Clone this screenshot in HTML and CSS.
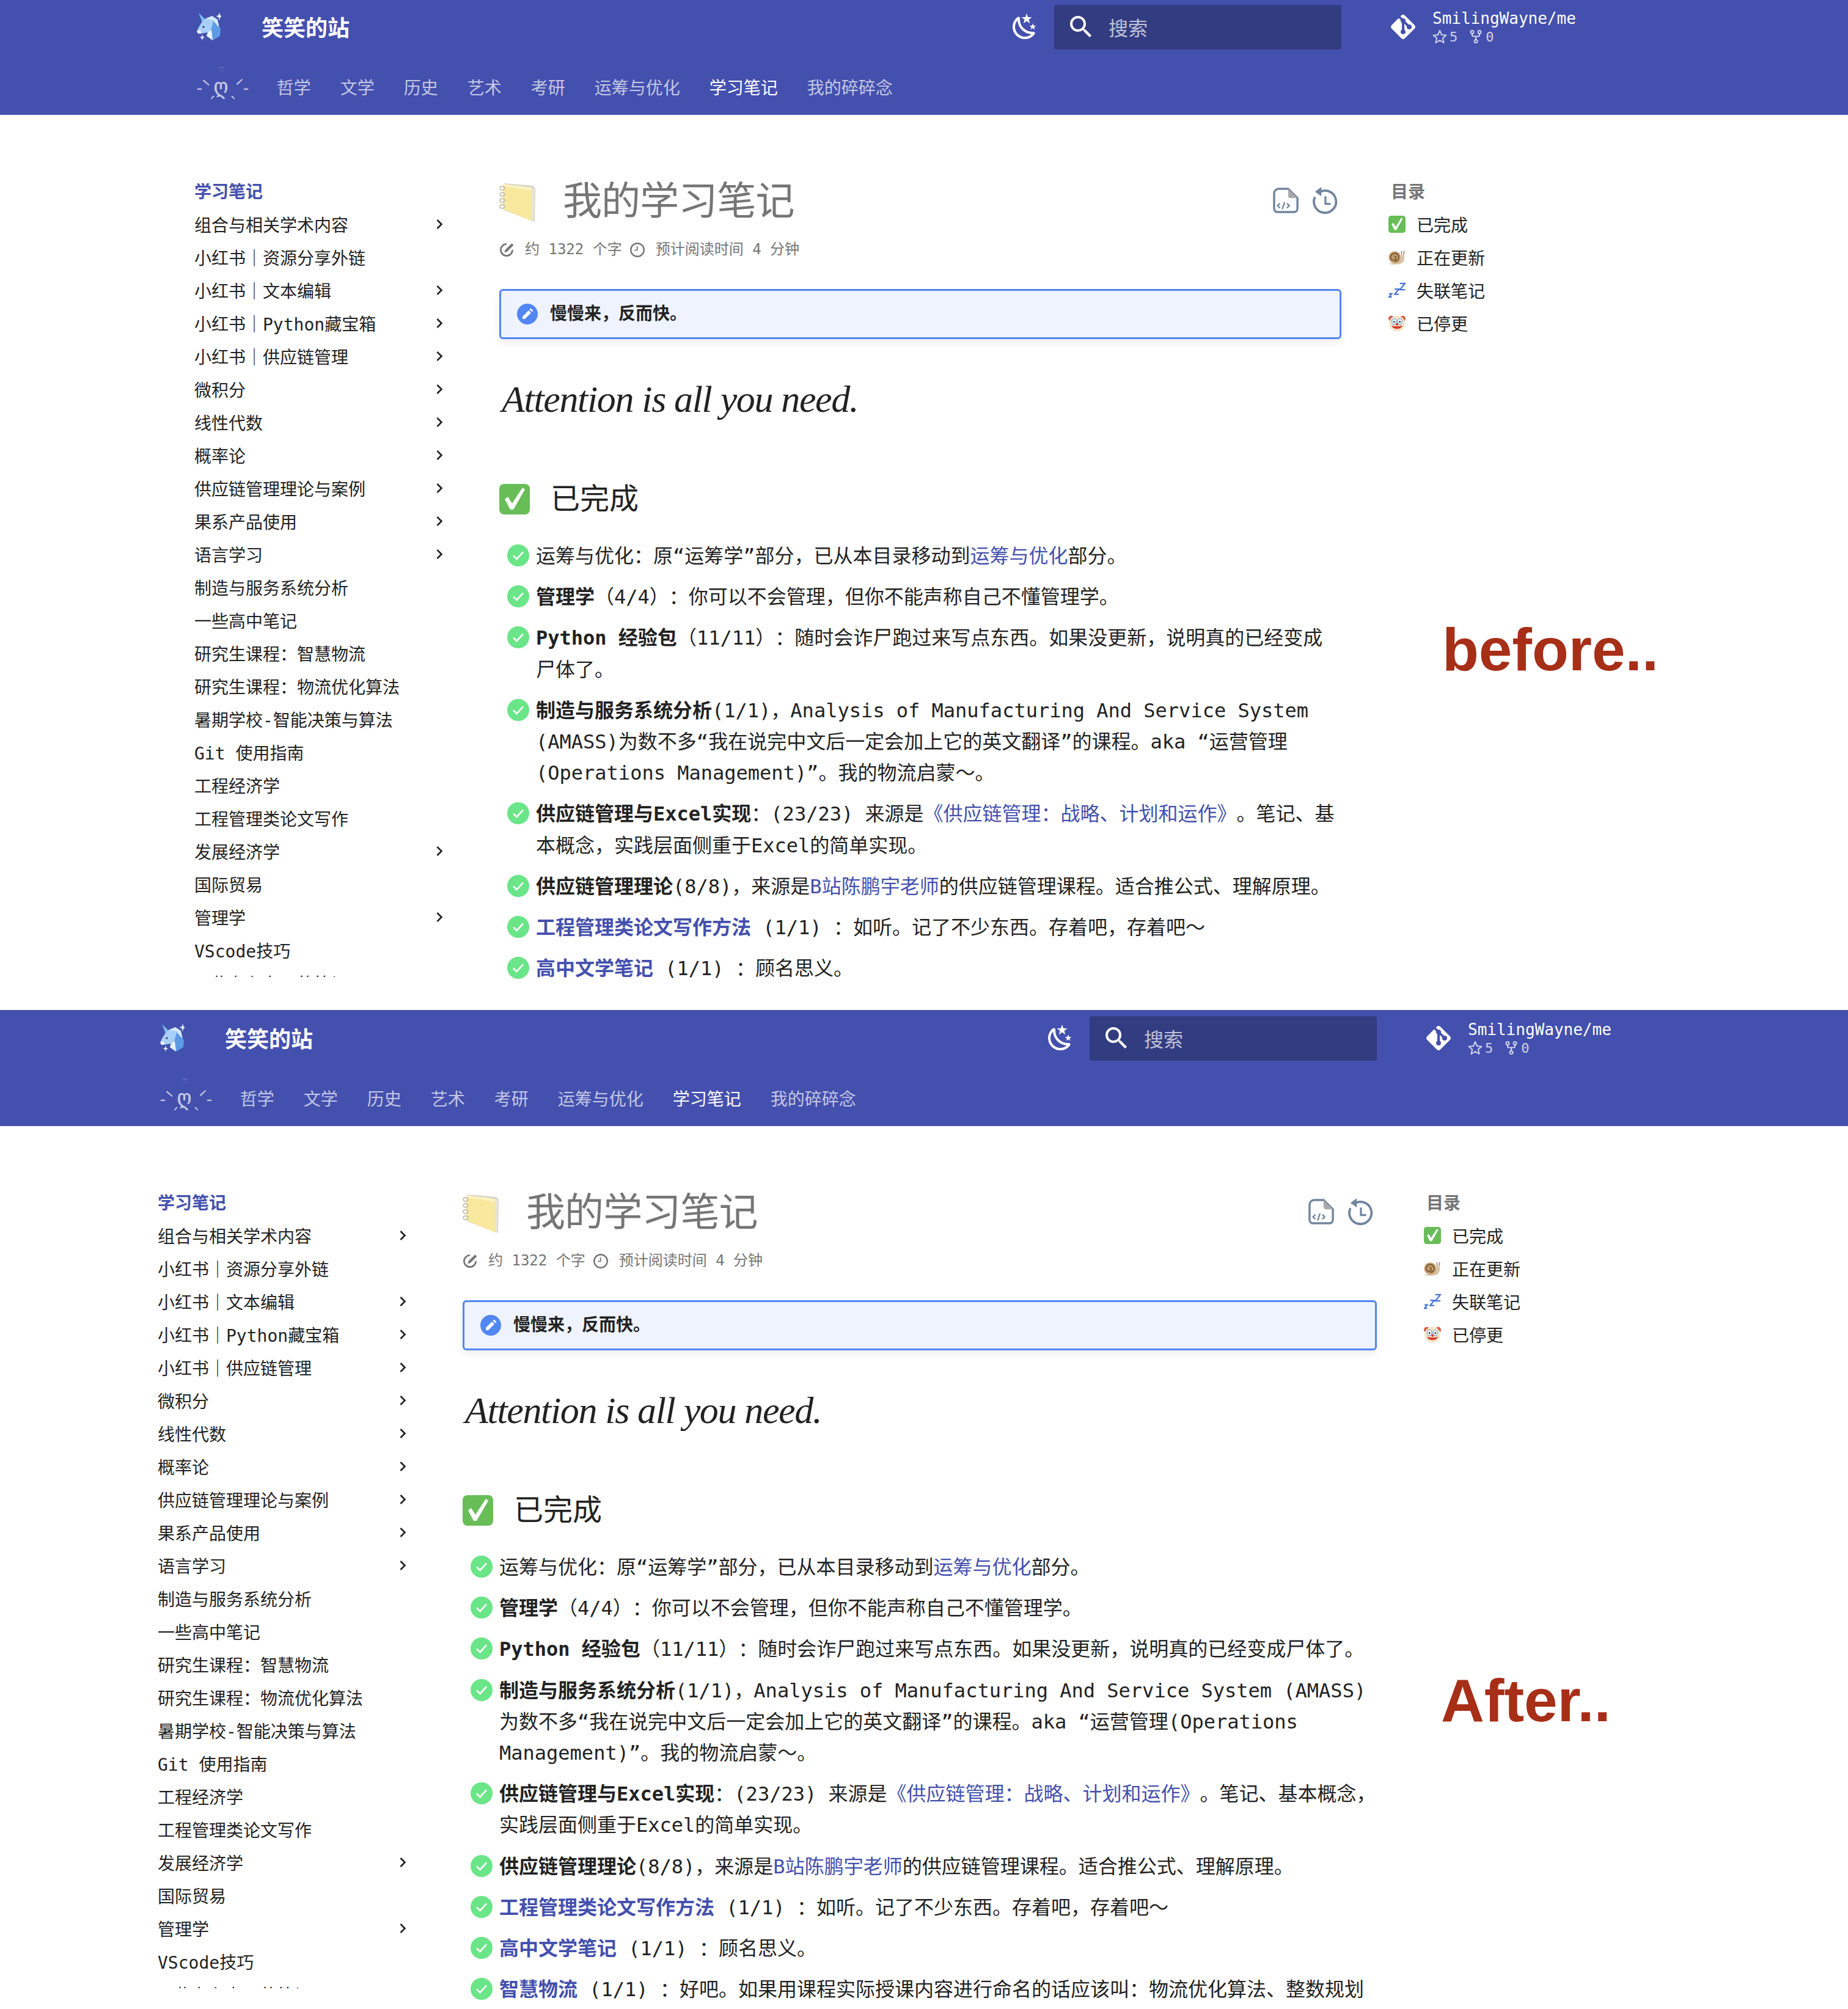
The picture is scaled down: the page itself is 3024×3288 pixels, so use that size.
FILE: index.html
```html
<!DOCTYPE html>
<html>
<head>
    <title>我的学习笔记</title>
    <meta charset="utf-8">
    <link rel="stylesheet" href="styles.css">
</head>

<body>
<svg class="sprite" xmlns="http://www.w3.org/2000/svg">
    <symbol id="i-unicorn" viewBox="16 12 44 46">
        <polygon points="23,12 34,23 29,27" fill="#7cc0ef"/>
        <polygon points="29,26 35,21 45,19 50,30 46,45 36,50 38,44 26,46 20,42 23,36" fill="#a8cff7"/>
        <polygon points="35,21 45,17 54,23 57,36 52,32 47,24" fill="#d3e7fb"/>
        <polygon points="47,26 59,38 58,50 46,57 41,48" fill="#5e9be6"/>
        <polygon points="38,44 44,40 46,57 36,50" fill="#e7f3fe"/>
        <polygon points="20,42 26,40 27,46 22,46" fill="#eef3f8"/>
        <circle cx="31" cy="35" r="1.5" fill="#1f2a4a"/>
        <path d="M57 11l1.3 5 4.2 1.6-4.2 1.6-1.3 5-1.3-5-4.2-1.6 4.2-1.6zM29 47l1 4 3.4 1.2-3.4 1.2-1 4-1-4-3.4-1.2 3.4-1.2z" fill="#e9f2ff"/>
    </symbol>
    <symbol id="i-moon" viewBox="0 0 24 24">
        <path d="M17.75,4.09L15.22,6.03L16.13,9.09L13.5,7.28L10.87,9.09L11.78,6.03L9.25,4.09L12.44,4L13.5,1L14.56,4L17.75,4.09M21.25,11L19.61,12.25L20.2,14.23L18.5,13.06L16.8,14.23L17.39,12.25L15.75,11L17.81,10.95L18.5,9L19.19,10.95L21.25,11M18.97,15.95C19.8,15.87 20.69,17.05 20.16,17.8C19.84,18.25 19.5,18.67 19.08,19.07C15.17,23 8.84,23 4.94,19.07C1.03,15.17 1.03,8.83 4.94,4.93C5.34,4.53 5.76,4.17 6.21,3.85C6.96,3.32 8.14,4.21 8.06,5.04C7.79,7.9 8.75,10.87 10.95,13.06C13.14,15.26 16.1,16.22 18.97,15.95M17.33,17.97C14.5,17.81 11.7,16.64 9.53,14.5C7.36,12.31 6.2,9.5 6.04,6.68C3.23,9.82 3.34,14.64 6.35,17.66C9.37,20.67 14.19,20.78 17.33,17.97Z" fill="currentColor"/>
    </symbol>
    <symbol id="i-search" viewBox="0 0 24 24">
        <path d="M9.5 3A6.5 6.5 0 0 1 16 9.5c0 1.61-.59 3.09-1.56 4.23l.27.27h.79l5 5-1.5 1.5-5-5v-.79l-.27-.27A6.516 6.516 0 0 1 9.5 16 6.5 6.5 0 0 1 3 9.5 6.5 6.5 0 0 1 9.5 3m0 2C7 5 5 7 5 9.5S7 14 9.5 14 14 12 14 9.5 12 5 9.5 5z" fill="currentColor"/>
    </symbol>
    <symbol id="i-git" viewBox="0 0 24 24">
        <path d="M2.6 10.59 8.38 4.8l1.69 1.7c-.24.85.15 1.78.93 2.23v5.54c-.6.34-1 .99-1 1.73a2 2 0 0 0 2 2 2 2 0 0 0 2-2c0-.74-.4-1.39-1-1.73V9.41l2.07 2.09c-.07.15-.07.32-.07.5a2 2 0 0 0 2 2 2 2 0 0 0 2-2 2 2 0 0 0-2-2c-.18 0-.35 0-.5.07L13.93 7.5a1.98 1.98 0 0 0-1.15-2.34c-.43-.16-.88-.2-1.28-.09L9.8 3.38l.79-.78c.78-.79 2.04-.79 2.82 0l7.99 7.99c.79.78.79 2.04 0 2.82l-7.99 7.99c-.78.79-2.04.79-2.82 0L2.6 13.41c-.79-.78-.79-2.04 0-2.82z" fill="currentColor"/>
    </symbol>
    <symbol id="i-star" viewBox="0 0 24 24">
        <polygon points="12,2 15,9 22.5,9.7 16.8,14.6 18.6,22 12,18 5.4,22 7.2,14.6 1.5,9.7 9,9" fill="none" stroke="currentColor" stroke-width="2" stroke-linejoin="round"/>
    </symbol>
    <symbol id="i-fork" viewBox="0 0 24 24">
        <g fill="none" stroke="currentColor" stroke-width="2">
            <circle cx="6" cy="4.5" r="2.5"/><circle cx="18" cy="4.5" r="2.5"/><circle cx="12" cy="19.5" r="2.5"/>
            <path d="M6 7v2.5a2 2 0 0 0 2 2h8a2 2 0 0 0 2-2V7M12 11.5V17"/>
        </g>
    </symbol>
    <symbol id="i-chevron" viewBox="0 0 24 24">
        <path d="M8.59 16.58 13.17 12 8.59 7.41 10 6l6 6-6 6-1.41-1.42z" fill="currentColor"/>
    </symbol>
    <symbol id="i-notebook" viewBox="0 0 60 64">
        <polygon points="8,2 55,6 59,10 58,64 55,64 8,46" fill="#d4d2c8"/>
        <polygon points="6,3 54,9 53,64 6,44" fill="#f9e99e"/>
        <polygon points="6,3 54,9 53,14 6,7" fill="#fbf2c0"/>
        <polygon points="53,9 58,10 57,62 53,64" fill="#e6e4da"/>
        <g fill="none" stroke="#c8c4b0" stroke-width="2">
            <ellipse cx="5" cy="10" rx="4" ry="3"/><ellipse cx="5" cy="20" rx="4" ry="3"/><ellipse cx="5" cy="30" rx="4" ry="3"/><ellipse cx="5" cy="40" rx="4" ry="3"/>
        </g>
    </symbol>
    <symbol id="i-done" viewBox="0 0 50 50">
        <rect width="50" height="50" rx="8" fill="#68bd57"/>
        <path d="M9 25l5-4 7 11L38 6l4 3-19 33h-5z" fill="#fff"/>
    </symbol>
    <symbol id="i-snail" viewBox="0 0 30 26">
        <path d="M1 24c6-1 13 0 18-5 3-3 3-7 3-11h5c2 5 1 12-3 15-4 3-15 3-22 2z" fill="#d8c3a5"/>
        <circle cx="11" cy="13" r="10.5" fill="#c19a6b"/>
        <path d="M11 20a7 7 0 1 0-7-7c0 3 2 5 5 5s4-2 4-4-1-3-3-3" fill="none" stroke="#6f4d2a" stroke-width="1.6"/>
        <path d="M23 8V2M27 8l.5-6" stroke="#7b6a56" stroke-width="1.4"/>
    </symbol>
    <symbol id="i-zzz" viewBox="0 0 30 30">
        <path d="M1 21h5l-5 6h5M11 13h7l-7 9h7M20 3h9l-9 11h9" fill="none" stroke="#4a76d8" stroke-width="2.4"/>
    </symbol>
    <symbol id="i-clown" viewBox="0 0 30 30">
        <circle cx="5" cy="7" r="5" fill="#e0563f"/><circle cx="25" cy="7" r="5" fill="#e0563f"/>
        <circle cx="15" cy="15.5" r="14" fill="#f5e6c8"/>
        <ellipse cx="10" cy="12" rx="4" ry="5" fill="#fff" stroke="#6fa4d8" stroke-width="1.4"/><ellipse cx="20" cy="12" rx="4" ry="5" fill="#fff" stroke="#6fa4d8" stroke-width="1.4"/>
        <circle cx="10" cy="12.5" r="1.6" fill="#3a3a3a"/><circle cx="20" cy="12.5" r="1.6" fill="#3a3a3a"/>
        <path d="M5 19c4 8 16 8 20 0-5 2-15 2-20 0z" fill="#d8382b"/>
        <circle cx="15" cy="17" r="2.2" fill="#d8382b"/>
    </symbol>
    <symbol id="i-task" viewBox="0 0 36 36">
        <circle cx="18" cy="18" r="18" fill="#6ae587"/>
        <path d="M10 18.5l5.5 5.5L26 12.5" fill="none" stroke="#fff" stroke-width="2.6"/>
    </symbol>
    <symbol id="i-pencil" viewBox="0 0 34 34">
        <circle cx="17" cy="17" r="17" fill="#5286f2"/>
        <path d="M9 25v-4l10-10 4 4-10 10zM20.5 9.5l2-2 4 4-2 2z" fill="#fff"/>
    </symbol>
    <symbol id="i-wrote" viewBox="2 2 20 20">
        <path d="M20 12a8 8 0 1 1-8-8" fill="none" stroke="currentColor" stroke-width="2.2"/>
        <path d="M9 15.5l1-3.5 9-9 2.5 2.5-9 9z" fill="currentColor"/>
    </symbol>
    <symbol id="i-clock" viewBox="2 2 20 20">
        <path d="M12 20a8 8 0 0 0 8-8 8 8 0 0 0-8-8 8 8 0 0 0-8 8 8 8 0 0 0 8 8m0-18a10 10 0 0 1 10 10 10 10 0 0 1-10 10C6.47 22 2 17.5 2 12A10 10 0 0 1 12 2m.5 5v6H8v-1.5h3V7z" fill="currentColor"/>
    </symbol>
    <symbol id="i-source" viewBox="0 0 44 44">
        <path d="M10 2h16l16 16v18a6 6 0 0 1-6 6H8a6 6 0 0 1-6-6V10a8 8 0 0 1 8-8z" fill="none" stroke="currentColor" stroke-width="3.6"/>
        <path d="M26 2l16 16H30a4 4 0 0 1-4-4z" fill="#a9a9ad"/>
        <path d="M12 27l-4 4 4 4M24 27l4 4-4 4M20 25l-4 12" fill="none" stroke="currentColor" stroke-width="2.4"/>
    </symbol>
    <symbol id="i-history" viewBox="0 0 44 48">
        <path d="M14 9a19 19 0 1 1-9 9" fill="none" stroke="currentColor" stroke-width="4"/>
        <path d="M16 1L5 9l11 8z" fill="currentColor"/>
        <path d="M23 17v13h9" fill="none" stroke="currentColor" stroke-width="3.4"/>
    </symbol>
</svg>

<section class="shot before">
    <header class="site-head">
        <div class="head-top">
            <div class="head-main">
                <div class="brand">
                    <svg class="logo"><use href="#i-unicorn"/></svg>
                    <span class="site-name">笑笑的站</span>
                </div>
                <svg class="moon"><use href="#i-moon"/></svg>
                <div class="search">
                    <svg class="search-icon"><use href="#i-search"/></svg>
                    <span>搜索</span>
                </div>
            </div>
            <div class="repo">
                <svg class="repo-icon"><use href="#i-git"/></svg>
                <div>
                    <div class="repo-name">SmilingWayne/me</div>
                    <div class="repo-facts">
                        <svg><use href="#i-star"/></svg><span>5</span>
                        <svg class="fork"><use href="#i-fork"/></svg><span>0</span>
                    </div>
                </div>
            </div>
        </div>
        <nav class="tabs">
            <a class="kaomoji">-ˋˏ<span>ღ<small>♡</small></span>ˎˊ-</a>
            <a>哲学</a><a>文学</a><a>历史</a><a>艺术</a><a>考研</a><a>运筹与优化</a>
            <a class="on">学习笔记</a><a>我的碎碎念</a>
        </nav>
    </header>

    <div class="page">
        <aside class="side">
            <div class="side-title">学习笔记</div>
            <div class="side-item">组合与相关学术内容<svg><use href="#i-chevron"/></svg></div>
            <div class="side-item">小红书｜资源分享外链</div>
            <div class="side-item">小红书｜文本编辑<svg><use href="#i-chevron"/></svg></div>
            <div class="side-item">小红书｜Python藏宝箱<svg><use href="#i-chevron"/></svg></div>
            <div class="side-item">小红书｜供应链管理<svg><use href="#i-chevron"/></svg></div>
            <div class="side-item">微积分<svg><use href="#i-chevron"/></svg></div>
            <div class="side-item">线性代数<svg><use href="#i-chevron"/></svg></div>
            <div class="side-item">概率论<svg><use href="#i-chevron"/></svg></div>
            <div class="side-item">供应链管理理论与案例<svg><use href="#i-chevron"/></svg></div>
            <div class="side-item">果系产品使用<svg><use href="#i-chevron"/></svg></div>
            <div class="side-item">语言学习<svg><use href="#i-chevron"/></svg></div>
            <div class="side-item">制造与服务系统分析</div>
            <div class="side-item">一些高中笔记</div>
            <div class="side-item">研究生课程：智慧物流</div>
            <div class="side-item">研究生课程：物流优化算法</div>
            <div class="side-item">暑期学校-智能决策与算法</div>
            <div class="side-item">Git 使用指南</div>
            <div class="side-item">工程经济学</div>
            <div class="side-item">工程管理类论文写作</div>
            <div class="side-item">发展经济学<svg><use href="#i-chevron"/></svg></div>
            <div class="side-item">国际贸易</div>
            <div class="side-item">管理学<svg><use href="#i-chevron"/></svg></div>
            <div class="side-item">VScode技巧</div>
            <div class="side-item">一些杂七杂八的笔记</div>
        </aside>

        <main class="doc">
            <div class="doc-tools">
                <svg class="tool"><use href="#i-source"/></svg>
                <svg class="tool"><use href="#i-history"/></svg>
            </div>
            <h1><svg class="h1-icon"><use href="#i-notebook"/></svg>我的学习笔记</h1>
            <div class="meta">
                <svg><use href="#i-wrote"/></svg><span>约 1322 个字</span>
                <svg><use href="#i-clock"/></svg><span>预计阅读时间 4 分钟</span>
            </div>
            <div class="note-box"><svg><use href="#i-pencil"/></svg>慢慢来，反而快。</div>
            <p class="quote">Attention is all you need.</p>
            <h2><svg class="h2-icon"><use href="#i-done"/></svg>已完成</h2>
            <ul class="tasks">
                <li><svg><use href="#i-task"/></svg><div>运筹与优化：原“运筹学”部分，已从本目录移动到<a>运筹与优化</a>部分。</div></li>
                <li><svg><use href="#i-task"/></svg><div><b>管理学</b>（4/4）：你可以不会管理，但你不能声称自己不懂管理学。</div></li>
                <li><svg><use href="#i-task"/></svg><div><b>Python 经验包</b>（11/11）：随时会诈尸跑过来写点东西。如果没更新，说明真的已经变成尸体了。</div></li>
                <li><svg><use href="#i-task"/></svg><div><b>制造与服务系统分析</b>(1/1)，Analysis of Manufacturing And Service System (AMASS)为数不多“我在说完中文后一定会加上它的英文翻译”的课程。aka “运营管理(Operations Management)”。我的物流启蒙～。</div></li>
                <li><svg><use href="#i-task"/></svg><div><b>供应链管理与Excel实现</b>：(23/23) 来源是<a>《供应链管理：战略、计划和运作》</a>。笔记、基本概念，实践层面侧重于Excel的简单实现。</div></li>
                <li><svg><use href="#i-task"/></svg><div><b>供应链管理理论</b>(8/8)，来源是<a>B站陈鹏宇老师</a>的供应链管理课程。适合推公式、理解原理。</div></li>
                <li><svg><use href="#i-task"/></svg><div><a><b>工程管理类论文写作方法</b></a> (1/1) ：如听。记了不少东西。存着吧，存着吧～</div></li>
                <li><svg><use href="#i-task"/></svg><div><a><b>高中文学笔记</b></a> (1/1) ：顾名思义。</div></li>
            </ul>
        </main>

        <aside class="toc">
            <div class="toc-title">目录</div>
            <div class="toc-item"><svg><use href="#i-done"/></svg>已完成</div>
            <div class="toc-item"><svg><use href="#i-snail"/></svg>正在更新</div>
            <div class="toc-item"><svg><use href="#i-zzz"/></svg>失联笔记</div>
            <div class="toc-item"><svg><use href="#i-clown"/></svg>已停更</div>
        </aside>
    </div>
    <div class="stamp">before..</div>
</section>

<section class="shot after">
    <header class="site-head">
        <div class="head-top">
            <div class="head-main">
                <div class="brand">
                    <svg class="logo"><use href="#i-unicorn"/></svg>
                    <span class="site-name">笑笑的站</span>
                </div>
                <svg class="moon"><use href="#i-moon"/></svg>
                <div class="search">
                    <svg class="search-icon"><use href="#i-search"/></svg>
                    <span>搜索</span>
                </div>
            </div>
            <div class="repo">
                <svg class="repo-icon"><use href="#i-git"/></svg>
                <div>
                    <div class="repo-name">SmilingWayne/me</div>
                    <div class="repo-facts">
                        <svg><use href="#i-star"/></svg><span>5</span>
                        <svg class="fork"><use href="#i-fork"/></svg><span>0</span>
                    </div>
                </div>
            </div>
        </div>
        <nav class="tabs">
            <a class="kaomoji">-ˋˏ<span>ღ<small>♡</small></span>ˎˊ-</a>
            <a>哲学</a><a>文学</a><a>历史</a><a>艺术</a><a>考研</a><a>运筹与优化</a>
            <a class="on">学习笔记</a><a>我的碎碎念</a>
        </nav>
    </header>

    <div class="page">
        <aside class="side">
            <div class="side-title">学习笔记</div>
            <div class="side-item">组合与相关学术内容<svg><use href="#i-chevron"/></svg></div>
            <div class="side-item">小红书｜资源分享外链</div>
            <div class="side-item">小红书｜文本编辑<svg><use href="#i-chevron"/></svg></div>
            <div class="side-item">小红书｜Python藏宝箱<svg><use href="#i-chevron"/></svg></div>
            <div class="side-item">小红书｜供应链管理<svg><use href="#i-chevron"/></svg></div>
            <div class="side-item">微积分<svg><use href="#i-chevron"/></svg></div>
            <div class="side-item">线性代数<svg><use href="#i-chevron"/></svg></div>
            <div class="side-item">概率论<svg><use href="#i-chevron"/></svg></div>
            <div class="side-item">供应链管理理论与案例<svg><use href="#i-chevron"/></svg></div>
            <div class="side-item">果系产品使用<svg><use href="#i-chevron"/></svg></div>
            <div class="side-item">语言学习<svg><use href="#i-chevron"/></svg></div>
            <div class="side-item">制造与服务系统分析</div>
            <div class="side-item">一些高中笔记</div>
            <div class="side-item">研究生课程：智慧物流</div>
            <div class="side-item">研究生课程：物流优化算法</div>
            <div class="side-item">暑期学校-智能决策与算法</div>
            <div class="side-item">Git 使用指南</div>
            <div class="side-item">工程经济学</div>
            <div class="side-item">工程管理类论文写作</div>
            <div class="side-item">发展经济学<svg><use href="#i-chevron"/></svg></div>
            <div class="side-item">国际贸易</div>
            <div class="side-item">管理学<svg><use href="#i-chevron"/></svg></div>
            <div class="side-item">VScode技巧</div>
            <div class="side-item">一些杂七杂八的笔记</div>
        </aside>

        <main class="doc">
            <div class="doc-tools">
                <svg class="tool"><use href="#i-source"/></svg>
                <svg class="tool"><use href="#i-history"/></svg>
            </div>
            <h1><svg class="h1-icon"><use href="#i-notebook"/></svg>我的学习笔记</h1>
            <div class="meta">
                <svg><use href="#i-wrote"/></svg><span>约 1322 个字</span>
                <svg><use href="#i-clock"/></svg><span>预计阅读时间 4 分钟</span>
            </div>
            <div class="note-box"><svg><use href="#i-pencil"/></svg>慢慢来，反而快。</div>
            <p class="quote">Attention is all you need.</p>
            <h2><svg class="h2-icon"><use href="#i-done"/></svg>已完成</h2>
            <ul class="tasks">
                <li><svg><use href="#i-task"/></svg><div>运筹与优化：原“运筹学”部分，已从本目录移动到<a>运筹与优化</a>部分。</div></li>
                <li><svg><use href="#i-task"/></svg><div><b>管理学</b>（4/4）：你可以不会管理，但你不能声称自己不懂管理学。</div></li>
                <li><svg><use href="#i-task"/></svg><div><b>Python 经验包</b>（11/11）：随时会诈尸跑过来写点东西。如果没更新，说明真的已经变成尸体了。</div></li>
                <li><svg><use href="#i-task"/></svg><div><b>制造与服务系统分析</b>(1/1)，Analysis of Manufacturing And Service System (AMASS)为数不多“我在说完中文后一定会加上它的英文翻译”的课程。aka “运营管理(Operations Management)”。我的物流启蒙～。</div></li>
                <li><svg><use href="#i-task"/></svg><div><b>供应链管理与Excel实现</b>：(23/23) 来源是<a>《供应链管理：战略、计划和运作》</a>。笔记、基本概念，实践层面侧重于Excel的简单实现。</div></li>
                <li><svg><use href="#i-task"/></svg><div><b>供应链管理理论</b>(8/8)，来源是<a>B站陈鹏宇老师</a>的供应链管理课程。适合推公式、理解原理。</div></li>
                <li><svg><use href="#i-task"/></svg><div><a><b>工程管理类论文写作方法</b></a> (1/1) ：如听。记了不少东西。存着吧，存着吧～</div></li>
                <li><svg><use href="#i-task"/></svg><div><a><b>高中文学笔记</b></a> (1/1) ：顾名思义。</div></li>
                <li><svg><use href="#i-task"/></svg><div><a><b>智慧物流</b></a> (1/1) ：好吧。如果用课程实际授课内容进行命名的话应该叫：物流优化算法、整数规划等。</div></li>
            </ul>
        </main>

        <aside class="toc">
            <div class="toc-title">目录</div>
            <div class="toc-item"><svg><use href="#i-done"/></svg>已完成</div>
            <div class="toc-item"><svg><use href="#i-snail"/></svg>正在更新</div>
            <div class="toc-item"><svg><use href="#i-zzz"/></svg>失联笔记</div>
            <div class="toc-item"><svg><use href="#i-clown"/></svg>已停更</div>
        </aside>
    </div>
    <div class="stamp">After..</div>
</section>
</body>
</html>
```

FILE: styles.css
```css
body {
    margin: 0;
    background: #fff;
    color: #222;
    font-family: "DejaVu Sans Mono", "Noto Sans CJK SC", monospace;
    font-size: 32px;
    text-spacing-trim: space-all;
}

.sprite {
    display: none;
}

.shot {
    position: relative;
    overflow: hidden;
}

.before {
    --left: 318px;
    --main: 1378px;
    height: 1655px;
    margin-top: -2px;
}

.after {
    --left: 258px;
    --main: 1496px;
    height: 1635px;
}

.site-head {
    height: 190px;
    padding-left: var(--left);
    background-color: #4450ae;
    color: #fff;
    box-sizing: border-box;
}

.head-top {
    display: flex;
    align-items: center;
    height: 92px;
}

.head-main {
    display: flex;
    align-items: center;
    width: calc(499px + var(--main));
}

.brand {
    display: flex;
    align-items: center;
    flex: 1;
}

.logo {
    width: 44px;
    height: 46px;
    margin-right: 66px;
}

.site-name {
    font-size: 36px;
    font-weight: bold;
    padding-bottom: 3px;
}

.moon {
    width: 48px;
    height: 48px;
    margin-right: 24px;
}

.search {
    display: flex;
    align-items: center;
    width: 470px;
    height: 73px;
    background-color: #323c81;
    border-radius: 4px;
    color: rgba(255, 255, 255, .7);
    box-sizing: border-box;
    padding-left: 20px;
}

.search-icon {
    width: 48px;
    height: 48px;
    color: #fff;
    margin-right: 21px;
}

.repo {
    display: flex;
    align-items: center;
    margin-left: 77px;
}

.repo-icon {
    width: 48px;
    height: 48px;
    margin-right: 24px;
}

.repo-name {
    font-size: 26px;
    line-height: 30px;
    margin-bottom: 2px;
}

.repo-facts {
    display: flex;
    align-items: center;
    height: 26px;
    font-size: 22px;
    color: rgba(255, 255, 255, .75);
}

.repo-facts svg {
    width: 24px;
    height: 24px;
    margin-right: 4px;
}

.repo-facts .fork {
    margin-left: 18px;
}

.tabs {
    display: flex;
    gap: 48px;
    padding-top: 6px;
    height: 92px;
    align-items: center;
    font-size: 28px;
    color: rgba(255, 255, 255, .7);
}

.tabs .on {
    color: #fff;
}

.kaomoji {
    letter-spacing: -6.2px;
    white-space: nowrap;
}

.kaomoji span {
    position: relative;
    font-size: 38px;
    line-height: 1;
    letter-spacing: 0;
}

.kaomoji small {
    position: absolute;
    left: 8px;
    top: -12px;
    font-size: 14px;
}

.page {
    display: grid;
    grid-template-columns: 499px var(--main) auto;
    padding: 99px 0 0 var(--left);
}

.side {
    height: 1312px;
    overflow: hidden;
    font-size: 28px;
}

.side-title {
    height: 53px;
    line-height: 56px;
    font-weight: bold;
    color: #4450ae;
}

.side-item {
    display: flex;
    justify-content: space-between;
    align-items: center;
    width: 417px;
    height: 54px;
}

.side-item svg {
    width: 32px;
    height: 32px;
}

.doc {
    position: relative;
    line-height: 51.2px;
}

.doc-tools {
    position: absolute;
    top: 18px;
    right: 6px;
    display: flex;
    gap: 22px;
    color: #72859f;
}

.tool {
    width: 42px;
    height: 46px;
}

h1 {
    display: flex;
    align-items: center;
    height: 84px;
    margin: 0;
    padding-top: 2px;
    box-sizing: border-box;
    font-size: 64px;
    font-weight: normal;
    letter-spacing: -.9px;
    color: #757575;
}

.h1-icon {
    width: 60px;
    height: 64px;
    margin-right: 44px;
}

.meta {
    display: flex;
    align-items: center;
    height: 36px;
    margin: 20px 0 46px;
    font-size: 24px;
    color: #757575;
}

.meta svg {
    width: 24px;
    height: 24px;
    margin-right: 18px;
}

.meta span {
    margin-right: 13px;
}

.note-box {
    display: flex;
    align-items: center;
    height: 82px;
    box-sizing: border-box;
    padding-left: 26px;
    border: 3px solid #5286f2;
    border-radius: 6px;
    background-color: #eef3fe;
    box-shadow: 0 6px 14px rgba(0, 0, 0, .07);
    font-size: 28px;
    font-weight: bold;
}

.note-box svg {
    width: 34px;
    height: 34px;
    margin-right: 20px;
}

.quote {
    height: 72px;
    margin: 62px 0 0 4px;
    font-family: "Liberation Serif", serif;
    font-style: italic;
    font-size: 62px;
    letter-spacing: -1.35px;
    line-height: 72px;
}

h2 {
    display: flex;
    align-items: center;
    height: 60px;
    margin: 98px 0 38px;
    font-size: 48px;
    font-weight: normal;
}

.h2-icon {
    width: 50px;
    height: 50px;
    margin-right: 34px;
}

.tasks {
    list-style: none;
    margin: 0;
    padding: 0;
}

.tasks li {
    display: flex;
    margin-bottom: 16px;
}

.tasks li svg {
    flex: none;
    width: 36px;
    height: 36px;
    margin: 6px 11px 0 13px;
}

.tasks a {
    color: #4450ae;
}

.toc {
    padding-left: 77px;
    font-size: 28px;
}

.toc-title {
    height: 53px;
    line-height: 56px;
    padding-left: 4px;
    font-weight: bold;
    color: #757575;
}

.toc-item {
    display: flex;
    align-items: center;
    height: 54px;
}

.toc-item svg {
    width: 28px;
    height: 28px;
    margin-right: 18px;
}

.stamp {
    position: absolute;
    font-family: "Liberation Sans", Arial, sans-serif;
    font-size: 98px;
    line-height: 100px;
    font-weight: bold;
    color: #a72e17;
}

.before .stamp {
    top: 1015px;
    left: 2360px;
}

.after .stamp {
    top: 1080px;
    left: 2358px;
}
```
